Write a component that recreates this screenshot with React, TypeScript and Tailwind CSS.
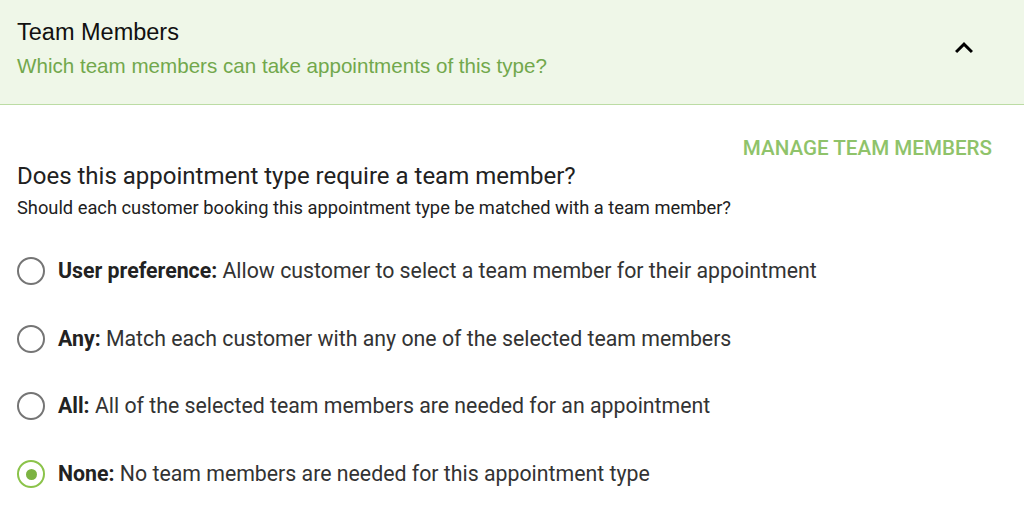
import React, { useState } from 'react';

const options = [
  { id: 'user', label: 'User preference:', text: 'Allow customer to select a team member for their appointment' },
  { id: 'any', label: 'Any:', text: 'Match each customer with any one of the selected team members' },
  { id: 'all', label: 'All:', text: 'All of the selected team members are needed for an appointment' },
  { id: 'none', label: 'None:', text: 'No team members are needed for this appointment type' },
];

function Radio({ checked }: { checked: boolean }) {
  return (
    <span
      className={`flex h-[28px] w-[28px] shrink-0 items-center justify-center rounded-full border-[2.5px] ${
        checked ? 'border-[#8bc34a]' : 'border-[#757575]'
      }`}
    >
      {checked && <span className="h-[11px] w-[11px] rounded-full bg-[#7cb342]" />}
    </span>
  );
}

export default function App() {
  const [selected, setSelected] = useState('none');

  return (
    <div className="min-h-[525px] w-full bg-white font-['Roboto',sans-serif] text-[#212121]">
      {/* Header */}
      <div className="flex h-[105px] items-start justify-between border-b-[1.5px] border-[#bcdca4] bg-[#eff7e8] pl-[17px] pr-[42px]">
        <div className="pt-[17px] font-['Liberation_Sans',Arial,sans-serif]">
          <div className="text-[23.5px] leading-[30px] text-[#111]">Team Members</div>
          <div className="mt-[6px] text-[20.6px] leading-[26px] text-[#72a84c]">
            Which team members can take appointments of this type?
          </div>
        </div>
        <button className="mt-[30px] text-black" aria-label="Collapse">
          <svg width="36" height="36" viewBox="0 0 24 24" fill="currentColor">
            <path d="M12 8l-6 6 1.41 1.41L12 10.83l4.59 4.58L18 14z" />
          </svg>
        </button>
      </div>

      {/* Body */}
      <div className="pl-[17px] pr-[32px]">
        <div className="flex justify-end pt-[31px]">
          <button className="text-[20.6px] font-medium leading-[24px] text-[#8fc36a]">MANAGE TEAM MEMBERS</button>
        </div>
        <h2 className="mt-[2px] text-[24px] leading-[28px] text-[#212121]">
          Does this appointment type require a team member?
        </h2>
        <p className="mt-[7px] text-[18.3px] leading-[22px] text-[#212121]">
          Should each customer booking this appointment type be matched with a team member?
        </p>

        <div className="mt-[38px] flex flex-col gap-[39.7px]">
          {options.map(o => (
            <label
              key={o.id}
              onClick={() => setSelected(o.id)}
              className="flex h-[28px] cursor-pointer items-center gap-[13px]"
            >
              <Radio checked={selected === o.id} />
              <span className="text-[21.3px] leading-[28px] text-[#333]">
                <b className="font-bold text-[#222]">{o.label}</b> {o.text}
              </span>
            </label>
          ))}
        </div>
      </div>
    </div>
  );
}
